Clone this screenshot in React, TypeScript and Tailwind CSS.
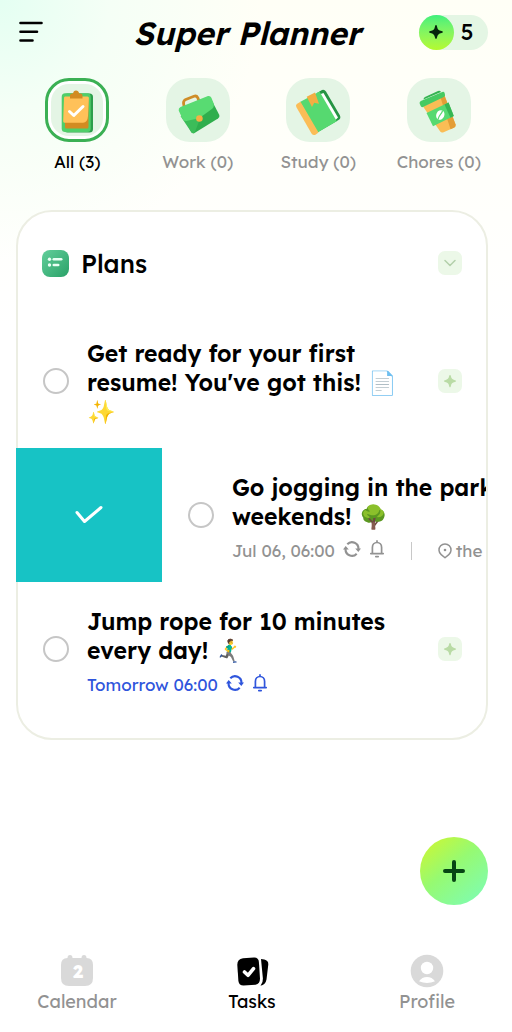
import { useState } from "react";
import type { ReactNode } from "react";

type Category = {
  name: string;
  count: number;
  icon: ReactNode;
};

const categories: Category[] = [
  { name: "All", count: 3, icon: <ClipboardArt /> },
  { name: "Work", count: 0, icon: <BriefcaseArt /> },
  { name: "Study", count: 0, icon: <BookArt /> },
  { name: "Chores", count: 0, icon: <CupArt /> },
];

const tabs = [
  { name: "Calendar", icon: <CalendarIcon /> },
  { name: "Tasks", icon: <TasksIcon /> },
  { name: "Profile", icon: <ProfileIcon /> },
];

export default function App() {
  const [category, setCategory] = useState("All");
  const [tab, setTab] = useState("Tasks");

  return (
    <div className="flex min-h-screen flex-col overflow-x-hidden bg-white bg-[radial-gradient(circle_at_0px_0px,#e4fff2_0px,#f5fff6_110px,#fffffa00_260px),linear-gradient(180deg,#fffff6_0px,#fffffb_180px,#ffffff_330px)] font-['Lexend','Inter',sans-serif] text-black">
      <header className="flex h-16 items-center justify-between pl-[18px] pr-6">
        <button type="button" aria-label="Menu" className="w-[69px]">
          <svg width="26" height="24" viewBox="0 0 26 24" stroke="#000" strokeWidth="2.6" strokeLinecap="round">
            <path d="M2.500 3H23.500M2.500 11.700H19M2.500 20.500H14.500" />
          </svg>
        </button>
        <h1 className="mt-[2px] pr-3 text-[32px] leading-10 font-semibold italic">Super Planner</h1>
        <div className="flex h-[35px] w-[69px] items-center rounded-full bg-[#e4f6e4]">
          <span className="flex size-[35px] items-center justify-center rounded-full bg-linear-to-b from-[#3df07c] to-[#b4fa2c]">
            <Sparkle className="size-4 text-[#06260c]" />
          </span>
          <span className="flex-1 pr-2 text-center text-[22px] leading-none font-medium">5</span>
        </div>
      </header>

      <nav aria-label="Categories" className="mt-[14px] grid grid-cols-4 pl-[17px] pr-[13px]">
        {categories.map((c) => {
          const active = c.name === category;
          return (
            <button key={c.name} type="button" onClick={() => setCategory(c.name)} className="flex flex-col items-center gap-2">
              <span className={active ? "size-16 overflow-hidden rounded-3xl border-[3px] border-[#3bb054] bg-white p-[3px]" : "size-16 rounded-3xl bg-[#e4f5e5]"}>
                <span className={active ? "flex size-[52px] items-center justify-center rounded-[18px] bg-[#e4f5e5]" : "block"}>{c.icon}</span>
              </span>
              <span className={active ? "text-[17px] leading-6 whitespace-nowrap" : "text-[17px] leading-6 whitespace-nowrap text-[#929292]"}>
                {c.name} ({c.count})
              </span>
            </button>
          );
        })}
      </nav>

      <main className="mx-4 mt-9 mr-6 rounded-[36px] border-2 border-[#eceee3] bg-white pb-[22px]">
        <div className="flex h-[102px] items-center px-6">
          <PlansIcon />
          <h2 className="mt-[2px] ml-3 flex-1 text-[25px] leading-8 font-medium">Plans</h2>
          <button type="button" aria-label="Collapse plans" className="flex size-6 items-center justify-center rounded-[7px] bg-[#ecf8e8]">
            <svg width="12" height="8" viewBox="0 0 12 8" fill="none" stroke="#b3cfaa" strokeWidth="1.500" strokeLinecap="round" strokeLinejoin="round">
              <path d="M1 1.500L6 6.500L11 1.500" />
            </svg>
          </button>
        </div>

        <ul>
          <TaskRow id="resume">
            Get ready for your first
            <br />
            resume! You've got this! 📄
            <br />✨
          </TaskRow>

          <li className="-mx-[2px] flex overflow-hidden border-r-2 border-[#eceee3]">
            <button type="button" aria-label="Mark done" className="flex w-[146px] shrink-0 items-center justify-center bg-[#17c3c5] text-white">
              <svg width="30" height="20" viewBox="0 0 30 20" fill="none" stroke="currentColor" strokeWidth="3" strokeLinecap="round" strokeLinejoin="round">
                <path d="M3 7.500L10.500 16.500L27 2.500" />
              </svg>
            </button>
            <div className="w-full shrink-0 pl-px">
              <TaskContent
                id="jogging"
                meta={
                  <p className="mt-2 flex h-6 items-center text-[17px] text-[#929292]">
                    <span className="whitespace-nowrap">Jul 06, 06:00</span>
                    <RepeatIcon />
                    <BellIcon />
                    <span className="mr-[26px] ml-[26px] h-[18px] w-px shrink-0 bg-[#c8c8c8]" />
                    <PinIcon />
                    <span className="ml-1">the</span>
                  </p>
                }
              >
                Go jogging in the park
                <br />
                weekends! 🌳
              </TaskContent>
            </div>
          </li>

          <TaskRow
            id="rope"
            meta={
              <p className="mt-2 flex h-6 items-center text-[17px] text-[#2f55dc]">
                <span className="whitespace-nowrap">Tomorrow 06:00</span>
                <RepeatIcon />
                <BellIcon />
              </p>
            }
          >
            Jump rope for 10 minutes
            <br />
            every day! 🏃‍♂️‍➡️
          </TaskRow>
        </ul>
      </main>

      <button type="button" aria-label="Add task" className="fixed right-6 bottom-[127px] flex size-[68px] items-center justify-center rounded-full bg-linear-[140deg,#c8f738_8%,#96fa72_45%,#80fcae_90%]">
        <svg width="24" height="24" viewBox="0 0 24 24" stroke="#064414" strokeWidth="4" strokeLinecap="round">
          <path d="M12 3V21M3 12H21" />
        </svg>
      </button>

      <footer className="mt-auto flex justify-between pr-[37px] pb-[18px] pl-[29px]">
        {tabs.map((t) => (
          <button key={t.name} type="button" onClick={() => setTab(t.name)} className={t.name === tab ? "flex w-24 flex-col items-center text-black" : "flex w-24 flex-col items-center text-[#929292]"}>
            <span className={t.name === tab ? "text-black" : "text-[#d9d9d9]"}>{t.icon}</span>
            <span className="mt-[2px] text-[18px] leading-6">{t.name}</span>
          </button>
        ))}
      </footer>
    </div>
  );
}

type TaskProps = { id: string; children: ReactNode; meta?: ReactNode };

function TaskRow(props: TaskProps) {
  return (
    <li>
      <TaskContent {...props} />
    </li>
  );
}

function TaskContent({ id, children, meta }: TaskProps) {
  return (
    <div className="flex min-h-[134px] items-center pr-6 pl-[25px]">
      <input id={id} type="checkbox" className="size-[26px] shrink-0 appearance-none rounded-full border-2 border-[#c6c6c6] bg-white checked:bg-[#17c3c5]" />
      <div className="ml-[18px] min-w-0 flex-1 self-start pt-[25px]">
        <label htmlFor={id} className="block text-[23px] leading-[29px] font-semibold whitespace-nowrap">
          {children}
        </label>
        {meta}
      </div>
      <button type="button" aria-label="Suggestions" className="flex size-6 shrink-0 items-center justify-center rounded-[7px] bg-[#ecf8e8]">
        <Sparkle className="size-[14px] text-[#b9dba5]" />
      </button>
    </div>
  );
}

function Sparkle({ className }: { className: string }) {
  return (
    <svg viewBox="0 0 16 16" fill="currentColor" className={className}>
      <path d="M8 1C8.500 1 8.800 1.600 9 2.400C9.600 5.400 10.600 6.400 13.600 7C14.400 7.200 15 7.500 15 8S14.400 8.800 13.600 9C10.600 9.600 9.600 10.600 9 13.600C8.800 14.400 8.500 15 8 15S7.200 14.400 7 13.600C6.400 10.600 5.400 9.600 2.400 9C1.600 8.800 1 8.500 1 8S1.600 7.200 2.400 7C5.400 6.400 6.400 5.400 7 2.400C7.200 1.600 7.500 1 8 1Z" />
    </svg>
  );
}

function PlansIcon() {
  return (
    <svg width="27" height="27" viewBox="0 0 27 27">
      <defs>
        <linearGradient id="plans" x1="0" y1="0" x2="1" y2="1">
          <stop offset="0" stopColor="#62cf9b" />
          <stop offset="1" stopColor="#2aa168" />
        </linearGradient>
      </defs>
      <rect width="27" height="27" rx="8" fill="url(#plans)" />
      <g fill="#e9fff4">
        <circle cx="7.500" cy="9.300" r="1.700" />
        <circle cx="7.500" cy="15" r="1.700" />
        <rect x="10.500" y="8" width="10" height="2.600" rx="1.300" />
        <rect x="10.500" y="13.700" width="7" height="2.600" rx="1.300" />
      </g>
    </svg>
  );
}

function RepeatIcon() {
  return (
    <svg width="18" height="18" viewBox="0 0 18 18" fill="none" stroke="currentColor" strokeWidth="2.100" className="-mt-1 ml-2 shrink-0">
      <path d="M4.300 4.300A6.400 6.400 0 0 1 15.400 9.200M13.700 13.700A6.400 6.400 0 0 1 2.600 8.800" />
      <path d="M12.200 8.400H18L15.300 12ZM0 9.600H5.800L2.700 6Z" fill="currentColor" stroke="none" />
    </svg>
  );
}

function BellIcon() {
  return (
    <svg width="16" height="18" viewBox="0 0 16 18" fill="none" stroke="currentColor" strokeWidth="1.700" strokeLinecap="round" strokeLinejoin="round" className="-mt-1 ml-2 shrink-0">
      <path d="M8 .9V2.400M3.400 13.400V7.400A4.600 4.900 0 0 1 12.600 7.400V13.400M1.800 13.600H14.200M6.800 16.600H9.200" />
    </svg>
  );
}

function PinIcon() {
  return (
    <svg width="14" height="16" viewBox="0 0 14 16" fill="none" stroke="currentColor" strokeWidth="1.500" className="shrink-0">
      <path d="M7 14.800L3.200 11.600A6 6 0 1 1 10.800 11.600Z" strokeLinejoin="round" />
      <circle cx="7" cy="7" r="1.300" fill="currentColor" stroke="none" />
    </svg>
  );
}

function ClipboardArt() {
  return (
    <svg width="64" height="64" viewBox="0 0 64 64" className="shrink-0">
      <rect x="19" y="15.500" width="29" height="39" rx="3.500" fill="#2c9e4b" />
      <rect x="16.700" y="15.300" width="29" height="38.700" rx="3.500" fill="#4fce69" />
      <rect x="20" y="20" width="23.500" height="30.500" rx="1.500" fill="#d28b22" />
      <path d="M20 18.500H42.500Q44 18.500 43.900 20L43 38Q42.600 44.500 38 44.700H19.500Q18 44.700 18.200 43L19 20Q19 18.500 20 18.500Z" fill="#ffc159" />
      <path d="M25 20.500V17.500Q25 15.500 27 15.500H28Q28.500 12.600 31 12.600T34.200 15.500H35.500Q37.500 15.500 37.500 17.500V20.500Z" fill="#d28b22" />
      <path d="M24.500 33.500L28.800 37.500L38 28.500" fill="none" stroke="#fff" strokeWidth="3" strokeLinecap="round" strokeLinejoin="round" />
    </svg>
  );
}

function BriefcaseArt() {
  return (
    <svg width="64" height="64" viewBox="0 0 64 64">
      <path d="M18.300 30L17.500 25Q17.500 22.500 19.800 21.500L28 18.200Q30.500 17.300 31.700 19.600L33.500 24" fill="none" stroke="#cf8d27" strokeWidth="2.800" />
      <path d="M16 36L44 19L53.300 37Q54 39.200 52 40.600L28.500 55Q26.500 56 25.300 54.200Z" fill="#2fae4d" />
      <path d="M14.500 38L34 41L28.500 55Q26.500 56 25.300 54.200Z" fill="#3cbd59" />
      <path d="M12.700 32.500Q12.300 30 14.500 29L42 18.100Q44.300 17.500 45.400 19.800L47.700 25.500Q48.500 30 44.500 32L33.500 40L20.500 43Q17.500 43.400 16.300 40.500Z" fill="#58db72" />
      <circle cx="33.400" cy="40.500" r="3.300" fill="#f5b043" />
    </svg>
  );
}

function BookArt() {
  return (
    <svg width="64" height="64" viewBox="0 0 64 64">
      <path d="M31 15L36 12Q38.500 11.300 40 13.400L54 37.500Q55.200 40.500 52.500 42L32 54Z" fill="#259443" />
      <path d="M33.500 16.500L37.500 15L52 39.500L48.500 43Z" fill="#fff" />
      <path d="M14 24L33.500 13.500L50.800 43.200L31.500 54.500Z" fill="#56d970" />
      <path d="M14.500 23.700L10.800 26Q9.500 27.200 10.300 29L25.500 55.500Q27.300 58 29.800 56.600L32.500 54.600Z" fill="#fbbd57" />
      <path d="M20.700 18.700L29 14.500L33 25.800L28.200 24.700L26 29Z" fill="#f3ae42" />
    </svg>
  );
}

function CupArt() {
  return (
    <svg width="64" height="64" viewBox="0 0 64 64">
      <path d="M16 28.500L37.500 17.500L48.600 46.500Q49 48.500 47.400 49.400L36 54.400Q34.300 55 33.200 53.400Z" fill="#fabd55" />
      <path d="M33.500 19.500L37.500 17.500L48.600 46.500Q49 48.500 47.400 49.400L43.500 51.200Z" fill="#e39d36" />
      <path d="M19.500 35L41.500 24.500L46.800 38L26 48.200Z" fill="#56d970" />
      <path d="M37.500 26.400L41.500 24.500L46.800 38L43.500 39.700Z" fill="#36b652" />
      <path d="M16.500 21.500Q16.500 19.800 18 19L31 13Q33 12.300 34 14Z" fill="#35b352" />
      <path d="M12.700 25.800Q12.100 24 13.800 23L35.300 14Q37 13.400 37.600 15L38 16.700Q38.500 18.300 36.800 19L16 29Q14.300 29.600 13.700 28Z" fill="#46ca62" />
      <ellipse cx="33.300" cy="37" rx="4" ry="5" transform="rotate(25 33.300 37)" fill="#fff" />
      <path d="M35.600 32.500C34.500 37 32.200 36 31 41.500" fill="none" stroke="#56d970" strokeWidth="1.200" />
    </svg>
  );
}

function CalendarIcon() {
  return (
    <svg width="34" height="34" viewBox="0 0 34 34">
      <path d="M10 1Q12.500 1 12.500 4H21.500Q21.500 1 24 1T26.500 4Q33 4 33 11V24Q33 32 25 32H9Q1 32 1 24V11Q1 4 7.500 4Q7.500 1 10 1Z" fill="currentColor" />
      <text x="18" y="24" textAnchor="middle" fontSize="18" fontWeight="800" fill="#fff">2</text>
    </svg>
  );
}

function TasksIcon() {
  return (
    <svg width="34" height="34" viewBox="0 0 34 34" fill="currentColor">
      <path d="M8 4.300L19 3.500Q23.500 3.300 23.900 8L25 24.500Q25 30 20.500 30.800L8.500 31.500Q4 31.500 3.400 27L2.300 11Q2.200 5 8 4.300Z" />
      <path d="M26 5L29.300 5.600Q33.500 6.500 33.300 10.500L31.500 25.500Q30.500 30.800 25.500 31.800Q28.200 28.500 27.900 24.500Z" />
      <path d="M9.500 18L13 21.300L18.500 14.700" fill="none" stroke="#fff" strokeWidth="3.600" strokeLinecap="round" strokeLinejoin="round" />
    </svg>
  );
}

function ProfileIcon() {
  return (
    <svg width="34" height="34" viewBox="0 0 34 34">
      <circle cx="17" cy="17" r="16.300" fill="currentColor" />
      <circle cx="17" cy="14" r="6.200" fill="#fff" />
      <path d="M9 27.300Q12 23 17 23T25 27.300Q21 29 17 29T9 27.300Z" fill="#fff" />
    </svg>
  );
}
